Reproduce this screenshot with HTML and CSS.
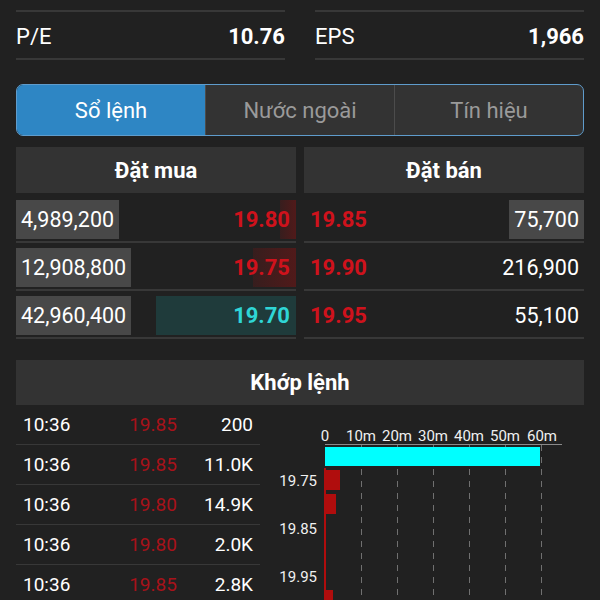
FILE: index.html
```html
<!DOCTYPE html>
<html lang="vi">
<head>
    <meta charset="UTF-8">
    <meta name="viewport" content="width=device-width, initial-scale=1.0">
    <title>Sổ lệnh</title>
    <link rel="stylesheet" href="styles.css">
</head>
<body>
    <div class="page">
        <!-- Chỉ số -->
        <div class="stats">
            <div class="stat"><span>P/E</span><span class="value">10.76</span></div>
            <div class="stat"><span>EPS</span><span class="value">1,966</span></div>
        </div>

        <!-- Tabs -->
        <div class="tabs">
            <div class="tab active">Sổ lệnh</div>
            <div class="tab">Nước ngoài</div>
            <div class="tab">Tín hiệu</div>
        </div>

        <!-- Order book -->
        <div class="book">
            <div class="book-side">
                <div class="book-head">Đặt mua</div>
                <div class="book-body">
                    <div class="book-row">
                        <span class="qty">4,989,200</span>
                        <span class="price red"><span class="bar bar-red" style="width: 16px"></span><span class="num">19.80</span></span>
                    </div>
                    <div class="book-row">
                        <span class="qty">12,908,800</span>
                        <span class="price red"><span class="bar bar-red" style="width: 43px"></span><span class="num">19.75</span></span>
                    </div>
                    <div class="book-row">
                        <span class="qty">42,960,400</span>
                        <span class="price cyan"><span class="bar bar-cyan" style="width: 140px"></span><span class="num">19.70</span></span>
                    </div>
                </div>
            </div>
            <div class="book-side sell">
                <div class="book-head">Đặt bán</div>
                <div class="book-body">
                    <div class="book-row">
                        <span class="price red"><span class="num">19.85</span></span>
                        <span class="qty">75,700</span>
                    </div>
                    <div class="book-row">
                        <span class="price red"><span class="num">19.90</span></span>
                        <span class="qty plain">216,900</span>
                    </div>
                    <div class="book-row">
                        <span class="price red"><span class="num">19.95</span></span>
                        <span class="qty plain">55,100</span>
                    </div>
                </div>
            </div>
        </div>

        <!-- Khớp lệnh -->
        <div class="match">
            <div class="match-head">Khớp lệnh</div>
            <div class="match-body">
                <ul class="trades">
                    <li><span>10:36</span><span class="t-price">19.85</span><span class="t-vol">200</span></li>
                    <li><span>10:36</span><span class="t-price">19.85</span><span class="t-vol">11.0K</span></li>
                    <li><span>10:36</span><span class="t-price">19.80</span><span class="t-vol">14.9K</span></li>
                    <li><span>10:36</span><span class="t-price">19.80</span><span class="t-vol">2.0K</span></li>
                    <li><span>10:36</span><span class="t-price">19.85</span><span class="t-vol">2.8K</span></li>
                </ul>

                <svg class="chart" width="324" height="195" viewBox="0 0 324 195">
                    <!-- axis labels -->
                    <g class="axis-text" text-anchor="middle">
                        <text x="65" y="36">0</text>
                        <text x="101" y="36">10m</text>
                        <text x="137" y="36">20m</text>
                        <text x="173" y="36">30m</text>
                        <text x="209" y="36">40m</text>
                        <text x="245" y="36">50m</text>
                        <text x="282" y="36">60m</text>
                    </g>
                    <line x1="65" y1="39.5" x2="302" y2="39.5" stroke="#8a8a8a" stroke-width="1"/>

                    <!-- grid -->
                    <g stroke="#707070" stroke-width="1" stroke-dasharray="6 6">
                        <line x1="101.5" y1="40" x2="101.5" y2="195"/>
                        <line x1="137.5" y1="40" x2="137.5" y2="195"/>
                        <line x1="173.5" y1="40" x2="173.5" y2="195"/>
                        <line x1="209.5" y1="40" x2="209.5" y2="195"/>
                        <line x1="245.5" y1="40" x2="245.5" y2="195"/>
                        <line x1="281.5" y1="40" x2="281.5" y2="195"/>
                    </g>

                    <!-- bars -->
                    <rect x="65" y="42" width="215" height="19" fill="#00ffff"/>
                    <rect x="64" y="63" width="2" height="132" fill="#b00d0d"/>
                    <rect x="65" y="65" width="15" height="20" fill="#b00d0d"/>
                    <rect x="65" y="89" width="11" height="20" fill="#b00d0d"/>
                    <rect x="65" y="113" width="1" height="20" fill="#b00d0d"/>
                    <rect x="65" y="137" width="1" height="20" fill="#b00d0d"/>
                    <rect x="65" y="161" width="1" height="20" fill="#b00d0d"/>
                    <rect x="65" y="185" width="8" height="20" fill="#b00d0d"/>

                    <!-- price labels -->
                    <g class="axis-text" text-anchor="end">
                        <text x="57" y="81">19.75</text>
                        <text x="57" y="129">19.85</text>
                        <text x="57" y="177">19.95</text>
                    </g>
                </svg>
            </div>
        </div>
    </div>
</body>
</html>
```

FILE: styles.css
```css
/* Global */
* {
    box-sizing: border-box;
    margin: 0;
    padding: 0;
}

body {
    font-family: Roboto, "Liberation Sans", sans-serif;
    background-color: #212121;
    color: #fff;
    overflow: hidden;
}

.page {
    padding: 10px 16px 0;
}

/* Stats */
.stats {
    display: grid;
    grid-template-columns: 1fr 1fr;
    column-gap: 30px;
}

.stat {
    display: flex;
    justify-content: space-between;
    align-items: center;
    height: 50px;
    padding-top: 2px;
    border-top: 2px solid #383838;
    border-bottom: 2px solid #383838;
    font-size: 22px;
}

.stat .value {
    font-weight: 700;
}

/* Tabs */
.tabs {
    display: flex;
    height: 52px;
    margin-top: 24px;
    background-color: #333;
    border: 1px solid #5f9ccc;
    border-radius: 7px;
    overflow: hidden;
}

.tab {
    flex: 1;
    display: flex;
    align-items: center;
    justify-content: center;
    font-size: 22px;
    color: #9a9a9a;
}

.tab + .tab {
    border-left: 1px solid #4c4c4c;
}

.tab.active {
    background-color: #2e86c4;
    color: #fff;
}

/* Order book */
.book {
    display: grid;
    grid-template-columns: 1fr 1fr;
    column-gap: 8px;
    margin-top: 11px;
}

.book-head {
    height: 46px;
    display: flex;
    align-items: center;
    justify-content: center;
    background-color: #333;
    font-size: 22px;
    font-weight: 700;
}

.book-body {
    padding-top: 2px;
}

.book-row {
    display: flex;
    justify-content: space-between;
    align-items: stretch;
    height: 48px;
    padding: 5px 0 2px;
    border-bottom: 2px solid #383838;
}

.qty {
    background-color: #484848;
    padding: 0 5px;
    line-height: 39px;
    font-size: 21.5px;
}

.qty.plain {
    background: none;
}

.price {
    position: relative;
    flex: 1;
    display: flex;
    align-items: center;
    justify-content: flex-end;
    padding-right: 6px;
    font-size: 22px;
    font-weight: 700;
}

.sell .price {
    justify-content: flex-start;
    padding: 0 0 0 6px;
}

.price .num {
    position: relative;
}

.price .bar {
    position: absolute;
    top: 0;
    right: 0;
    bottom: 0;
}

.bar-red {
    background: linear-gradient(to right, rgba(120, 20, 20, 0.25), rgba(120, 20, 20, 0.55));
}

.bar-cyan {
    background-color: #1f3b3b;
}

.red {
    color: #cf121c;
}

.cyan {
    color: #2fd6d6;
}

/* Khớp lệnh */
.match {
    margin-top: 21px;
}

.match-head {
    height: 45px;
    display: flex;
    align-items: center;
    justify-content: center;
    background-color: #333;
    font-size: 22px;
    font-weight: 700;
}

.match-body {
    display: flex;
}

.trades {
    list-style-type: none;
    width: 244px;
}

.trades li {
    display: grid;
    grid-template-columns: 90px 80px 1fr;
    align-items: center;
    height: 40px;
    padding: 0 7px;
    border-bottom: 1px solid #383838;
    font-size: 19px;
}

.trades .t-price {
    text-align: center;
    color: #a8121a;
}

.trades .t-vol {
    text-align: right;
}

.chart {
    display: block;
}

.axis-text {
    font-family: Roboto, "Liberation Sans", sans-serif;
    font-size: 15px;
    fill: #f0f0f0;
}
```
